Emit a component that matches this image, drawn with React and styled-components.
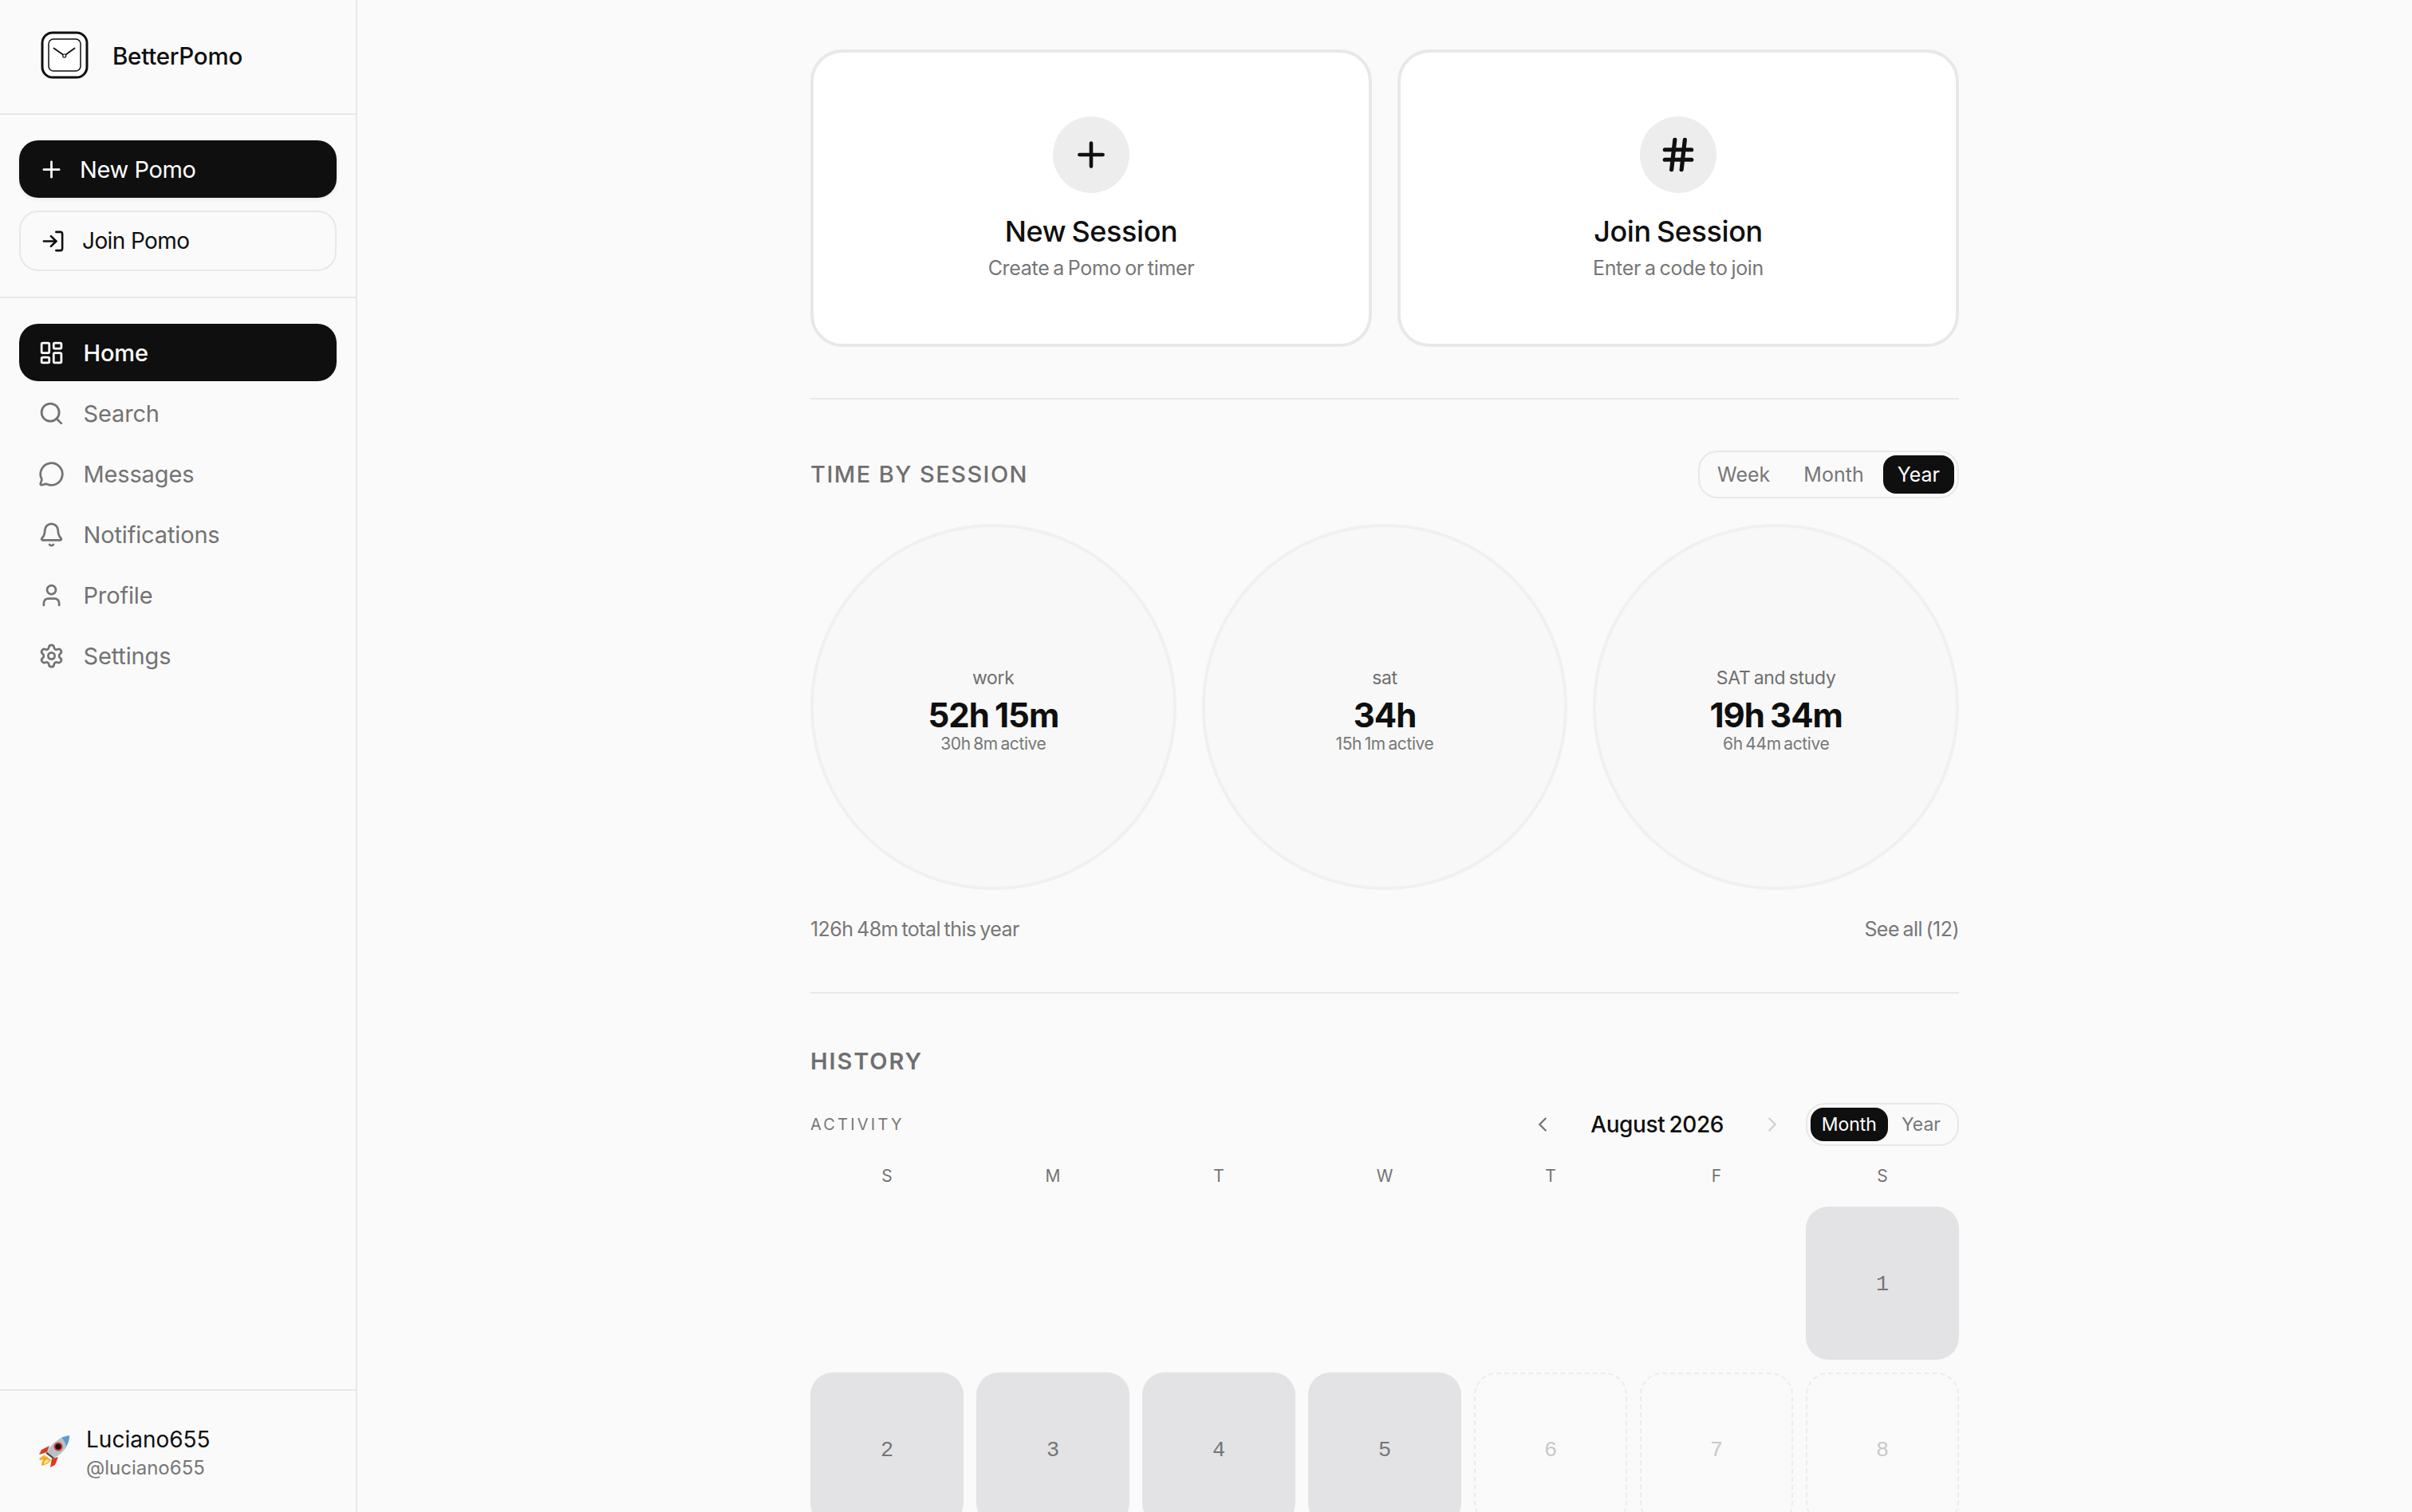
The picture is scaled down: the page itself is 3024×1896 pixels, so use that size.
import React from "react";
import styled, { createGlobalStyle } from "styled-components";
import { Plus, LogIn, LayoutDashboard, Search, MessageCircle, Bell, User, Settings, Hash, ChevronLeft, ChevronRight } from "lucide-react";

const Global = createGlobalStyle`
  * { box-sizing: border-box; }
  html, body { margin: 0; padding: 0; background: #fafafa; }
  body { font-family: Inter, "Liberation Sans", sans-serif; color: #0f0f0f; word-spacing: -0.12em; }
`;

const Shell = styled.div`display: flex; height: 100vh; overflow: hidden; background: #fafafa;`;
const Sidebar = styled.aside`width: 448px; flex: none; display: flex; flex-direction: column; border-right: 2px solid #e8e8e8;`;
const Brand = styled.div`height: 144px; flex: none; display: flex; align-items: center; gap: 30px; padding: 0 0 4px 51px; border-bottom: 2px solid #e8e8e8;`;
const BrandName = styled.span`font-size: 29.5px; font-weight: 500; letter-spacing: -0.25px; padding-top: 2px;`;
const Actions = styled.div`display: flex; flex-direction: column; gap: 16px; padding: 32px 24px; border-bottom: 2px solid #e8e8e8;`;
const ActionButton = styled.button`
  display: flex; align-items: center; gap: ${p => (p.$primary ? "19.5px" : "21.5px")}; padding: 0 ${p => (p.$primary ? "23.5px" : "24.5px")}; height: ${p => (p.$primary ? "72px" : "76px")};
  border-radius: 24px; font: inherit; font-size: ${p => (p.$primary ? "29px" : "28px")}; letter-spacing: ${p => (p.$primary ? "-0.4px" : "-0.6px")};
  border: ${p => (p.$primary ? "none" : "2px solid #e8e8e8")};
  background: ${p => (p.$primary ? "#0f0f0f" : "transparent")};
  color: ${p => (p.$primary ? "#fff" : "#0f0f0f")};
  box-shadow: ${p => (p.$primary ? "0 2px 4px rgba(0,0,0,.08)" : "none")};
`;
const Nav = styled.nav`display: flex; flex-direction: column; gap: 4px; padding: 32px 24px 0; flex: 1;`;
const NavItem = styled.a`
  display: flex; align-items: center; gap: 24px; height: 72px; padding: 0 23.5px; border-radius: 24px; font-size: 29px; letter-spacing: -0.15px;
  background: ${p => (p.$active ? "#0f0f0f" : "transparent")};
  color: ${p => (p.$active ? "#fff" : "#737373")};
  font-weight: ${p => (p.$active ? 500 : 400)};
`;
const Account = styled.div`height: 154px; flex: none; display: flex; align-items: center; gap: 19px; padding: 0 0 0 47px; border-top: 2px solid #e8e8e8;`;
const Who = styled.div`display: flex; flex-direction: column; gap: 1px; padding-top: 3px;`;
const WhoName = styled.span`font-size: 28px; line-height: 38px;`;
const WhoHandle = styled.span`font-size: 24px; line-height: 32px; color: #777;`;

const Main = styled.main`flex: 1; min-width: 0; display: flex; justify-content: center; padding-top: 62px;`;
const Column = styled.div`width: 1440px; flex: none;`;
const CardRow = styled.div`display: grid; grid-template-columns: 1fr 1fr; gap: 32px;`;
const ActionCard = styled.div`
  height: 373px; background: #fff; border: 4px solid #e8e8e8; border-radius: 40px;
  display: flex; flex-direction: column; align-items: center; padding-top: 80px;
`;
const CardIcon = styled.div`width: 96px; height: 96px; border-radius: 50%; background: #ededed; display: flex; align-items: center; justify-content: center;`;
const CardTitle = styled.div`margin-top: 25px; font-size: 36px; line-height: 46px; font-weight: 500; letter-spacing: -0.4px;`;
const CardSub = styled.div`margin-top: 7px; font-size: 25px; line-height: 32px; color: #777; letter-spacing: -0.3px;`;
const Rule = styled.div`height: 2px; background: #e8e8e8; margin-top: ${p => p.$top}px;`;
const SectionHead = styled.div`display: flex; align-items: center; justify-content: space-between; margin-top: 64px;`;
const SectionTitle = styled.h2`margin: 0; font-size: 29px; line-height: 40px; font-weight: 500; letter-spacing: 1.45px; color: #6f6f6f; word-spacing: 0;`;
const Segment = styled.div`display: flex; align-items: center; padding: 4px; height: ${p => p.$h}px; border: 2px solid #e8e8e8; border-radius: 24px;`;
const SegmentButton = styled.span`
  display: flex; align-items: center; justify-content: center; height: ${p => p.$h}px; padding: 0 ${p => p.$pad}px; border-radius: 16px; font-size: ${p => p.$fs}px;
  background: ${p => (p.$active ? "#0f0f0f" : "transparent")};
  color: ${p => (p.$active ? "#fff" : "#777")};
`;
const Circles = styled.div`display: grid; grid-template-columns: repeat(3, 1fr); gap: 32px; margin-top: 32px;`;
const Circle = styled.div`
  aspect-ratio: 1; border-radius: 50%; border: 4px solid #f0f0f0; background: #f8f8f8;
  display: flex; flex-direction: column; align-items: center; justify-content: center; padding-top: 10px;
`;
const CircleLabel = styled.div`font-size: 23px; line-height: 30px; color: #6f6f6f; letter-spacing: -0.3px;`;
const CircleValue = styled.div`margin-top: 6px; font-size: 42px; line-height: 52px; font-weight: 700; letter-spacing: -1px;`;
const CircleSub = styled.div`margin-top: -4px; font-size: 21px; line-height: 28px; color: #777; letter-spacing: -0.4px;`;
const Totals = styled.div`display: flex; justify-content: space-between; margin-top: 33px; font-size: 25px; line-height: 32px; color: #777; letter-spacing: -0.55px;`;
const HistoryTitle = styled(SectionTitle)`margin-top: 65px; font-weight: 600; letter-spacing: 1.9px;`;
const ActivityRow = styled.div`display: flex; align-items: center; justify-content: space-between; margin-top: 32px;`;
const ActivityLabel = styled.span`font-size: 20px; letter-spacing: 3.2px; color: #777;`;
const Pager = styled.div`display: flex; align-items: center;`;
const MonthLabel = styled.span`width: 258px; text-align: center; font-size: 28px; font-weight: 500; letter-spacing: -0.4px;`;
const PagerSide = styled.div`display: flex; align-items: center; gap: 27px;`;
const Grid = styled.div`display: grid; grid-template-columns: repeat(7, 1fr); gap: 16px;`;
const WeekRow = styled(Grid)`margin-top: 24px; margin-bottom: 24px;`;
const WeekDay = styled.div`text-align: center; font-size: 21px; line-height: 28px; color: #737373;`;
const Day = styled.div`
  height: 192px; border-radius: 28px; display: flex; align-items: center; justify-content: center; padding-top: 4px;
  font-family: "Liberation Mono", "DejaVu Sans Mono", monospace; font-size: 27px;
  background: ${p => (p.$kind === "past" ? "#e3e3e5" : "transparent")};
  border: ${p => (p.$kind === "future" ? "2px dashed #ececec" : "none")};
  color: ${p => (p.$kind === "future" ? "#c9c9c9" : "#767678")};
`;

const Logo = () => (
  <svg width="60" height="60" viewBox="0 0 60 60" fill="none" style={{ flex: "none" }}>
    <rect x="2" y="2" width="56" height="56" rx="13" stroke="#0f0f0f" strokeWidth="3" fill="#fff" />
    <rect x="10" y="10" width="40" height="40" rx="6" stroke="#0f0f0f" strokeWidth="1.5" />
    <path d="M16.5 21.5 28 29.5M42.5 21.5 31.5 29.5" stroke="#0f0f0f" strokeWidth="1.8" strokeLinecap="round" />
    <circle cx="29.7" cy="31" r="2" stroke="#0f0f0f" strokeWidth="1.2" fill="#fff" />
  </svg>
);

const Rocket = () => (
  <svg width="42" height="42" viewBox="0 0 42 42" style={{ flex: "none" }}>
    <path d="M9 25 2 30 l1 2 8-1z" fill="#f2b22e" />
    <path d="M15 14 5 19 2 25l10-3z" fill="#d93a25" />
    <path d="M26 28 22 38l-6 3 2-11z" fill="#d93a25" />
    <path d="M11 27c-4 3-6 8-6 12 5-1 9-3 12-7z" fill="#f6a623" />
    <path d="M11 31c-2 2-3 4-3 6 3-1 5-2 7-5z" fill="#fde68a" />
    <path d="M12 22C17 11 28 3 40 1c0 12-8 23-19 28z" fill="#b8c1c8" />
    <path d="M30 3.5 40 1c0 5-1.500 9.500-4 14-1-5-3-9-6-11.500z" fill="#5b9bd5" />
    <path d="M12 22 21 29l-2 1-8.500-6.500z" fill="#3c3c40" />
    <circle cx="26" cy="15" r="5.500" fill="#d93a25" />
    <circle cx="26" cy="15" r="3.600" fill="#15151a" />
  </svg>
);

const sessions = [
  { label: "work", value: "52h 15m", active: "30h 8m active" },
  { label: "sat", value: "34h", active: "15h 1m active" },
  { label: "SAT and study", value: "19h 34m", active: "6h 44m active" },
];
const navItems = [
  { label: "Home", Icon: LayoutDashboard, active: true },
  { label: "Search", Icon: Search },
  { label: "Messages", Icon: MessageCircle },
  { label: "Notifications", Icon: Bell },
  { label: "Profile", Icon: User },
  { label: "Settings", Icon: Settings },
];
const days = [...Array(6).fill(null), 1, 2, 3, 4, 5, 6, 7, 8];

export default function App() {
  return (
    <Shell>
      <Global />
      <Sidebar>
        <Brand>
          <Logo />
          <BrandName>BetterPomo</BrandName>
        </Brand>
        <Actions>
          <ActionButton $primary><Plus size={33} strokeWidth={2} />New Pomo</ActionButton>
          <ActionButton><LogIn size={31} strokeWidth={2} />Join Pomo</ActionButton>
        </Actions>
        <Nav>
          {navItems.map(({ label, Icon, active }) => (
            <NavItem key={label} $active={active}><Icon size={33} strokeWidth={2} />{label}</NavItem>
          ))}
        </Nav>
        <Account>
          <Rocket />
          <Who>
            <WhoName>Luciano655</WhoName>
            <WhoHandle>@luciano655</WhoHandle>
          </Who>
        </Account>
      </Sidebar>
      <Main>
        <Column>
          <CardRow>
            <ActionCard>
              <CardIcon><Plus size={50} strokeWidth={2.2} /></CardIcon>
              <CardTitle>New Session</CardTitle>
              <CardSub>Create a Pomo or timer</CardSub>
            </ActionCard>
            <ActionCard>
              <CardIcon><Hash size={50} strokeWidth={2.5} /></CardIcon>
              <CardTitle>Join Session</CardTitle>
              <CardSub>Enter a code to join</CardSub>
            </ActionCard>
          </CardRow>
          <Rule $top={64} />
          <SectionHead>
            <SectionTitle>TIME BY SESSION</SectionTitle>
            <Segment $h={60}>
              <SegmentButton $h={48} $pad={18} $fs={25}>Week</SegmentButton>
              <SegmentButton $h={48} $pad={24} $fs={25}>Month</SegmentButton>
              <SegmentButton $h={48} $pad={18} $fs={25} $active>Year</SegmentButton>
            </Segment>
          </SectionHead>
          <Circles>
            {sessions.map(s => (
              <Circle key={s.label}>
                <CircleLabel>{s.label}</CircleLabel>
                <CircleValue>{s.value}</CircleValue>
                <CircleSub>{s.active}</CircleSub>
              </Circle>
            ))}
          </Circles>
          <Totals>
            <span>126h 48m total this year</span>
            <span>See all (12)</span>
          </Totals>
          <Rule $top={63} />
          <HistoryTitle>HISTORY</HistoryTitle>
          <ActivityRow>
            <ActivityLabel>ACTIVITY</ActivityLabel>
            <PagerSide>
              <Pager>
                <ChevronLeft size={30} color="#737373" strokeWidth={1.8} />
                <MonthLabel>August 2026</MonthLabel>
                <ChevronRight size={30} color="#cfcfcf" strokeWidth={1.8} />
              </Pager>
              <Segment $h={54}>
                <SegmentButton $h={42} $pad={14} $fs={23} $active>Month</SegmentButton>
                <SegmentButton $h={42} $pad={17} $fs={23}>Year</SegmentButton>
              </Segment>
            </PagerSide>
          </ActivityRow>
          <WeekRow>
            {["S", "M", "T", "W", "T", "F", "S"].map((d, i) => <WeekDay key={i}>{d}</WeekDay>)}
          </WeekRow>
          <Grid>
            {days.map((d, i) =>
              d === null ? <div key={i} /> : <Day key={i} $kind={d <= 5 ? "past" : "future"}>{d}</Day>
            )}
          </Grid>
        </Column>
      </Main>
    </Shell>
  );
}
